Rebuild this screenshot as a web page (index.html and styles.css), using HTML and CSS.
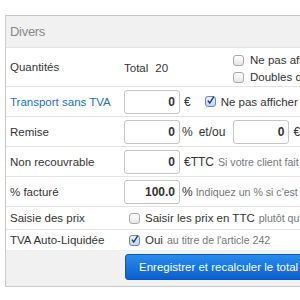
FILE: index.html
```html
<!DOCTYPE html>
<html lang="fr">
<head>
  <meta charset="UTF-8">
  <meta name="viewport" content="width=device-width, initial-scale=1.0">
  <title>Divers</title>
  <link rel="stylesheet" href="styles.css">
</head>
<body>
  <div class="panel">
    <div class="panel_head">Divers</div>

    <div class="row row_qty">
      <div class="label">Quantités</div>
      <div class="value qty">
        <div class="total"><span>Total</span><span>20</span></div>
        <div class="checks">
          <div class="check_line"><span class="box"></span>Ne pas afficher les quantités</div>
          <div class="check_line"><span class="box"></span>Doubles quantités</div>
        </div>
      </div>
    </div>

    <div class="row">
      <div class="label link">Transport sans TVA</div>
      <div class="value">
        <div class="field">0</div>
        <span class="unit">€</span>
        <span class="box box_on wide">
          <svg width="11" height="11" viewBox="0 0 11 11"><path d="M2.3 5.6 L4.6 8.6 L9.6 0.8" fill="none" stroke="#1f3b73" stroke-width="1.8"/></svg>
        </span>
        <span>Ne pas afficher le transport</span>
      </div>
    </div>

    <div class="row">
      <div class="label">Remise</div>
      <div class="value">
        <div class="field">0</div>
        <span class="unit unit_pct">%</span>
        <span class="andor">et/ou</span>
        <div class="field">0</div>
        <span class="unit">€</span>
      </div>
    </div>

    <div class="row">
      <div class="label">Non recouvrable</div>
      <div class="value">
        <div class="field">0</div>
        <span class="unit">€TTC</span>
        <span class="hint">Si votre client fait de la rétention</span>
      </div>
    </div>

    <div class="row">
      <div class="label">% facturé</div>
      <div class="value">
        <div class="field">100.0</div>
        <span class="unit unit_pct">%</span>
        <span class="hint hint_pct">Indiquez un % si c'est un acompte</span>
      </div>
    </div>

    <div class="row row_small">
      <div class="label">Saisie des prix</div>
      <div class="value">
        <span class="box box_line"></span>
        <span>Saisir les prix en TTC</span>
        <span class="hint">plutôt qu'en HT</span>
      </div>
    </div>

    <div class="row row_last">
      <div class="label">TVA Auto-Liquidée</div>
      <div class="value">
        <span class="box box_on box_line">
          <svg width="11" height="11" viewBox="0 0 11 11"><path d="M2.3 5.6 L4.6 8.6 L9.6 0.8" fill="none" stroke="#1f3b73" stroke-width="1.8"/></svg>
        </span>
        <span>Oui</span>
        <span class="hint">au titre de l'article 242</span>
      </div>
    </div>

    <div class="panel_foot">
      <button class="btn">Enregistrer et recalculer le total</button>
    </div>
  </div>
</body>
</html>
```

FILE: styles.css
```css
* {
  margin: 0;
  padding: 0;
  box-sizing: border-box;
}
body {
  overflow: hidden;
  font-family: "Liberation Sans", Arial, sans-serif;
  font-size: 11.5px;
  color: #333;
  background: #fff;
}
/* panneau principal, plus large que la fenêtre */
.panel {
  width: 480px;
  margin: 15px 0 0 5px;
  border: 1px solid #c9c9c9;
  white-space: nowrap;
}
.panel_head {
  height: 32px;
  padding: 8px 0 0 4px;
  background: #f1f1f1;
  border-bottom: 1px solid #e2e2e2;
  font-size: 13px;
  color: #8a8a8a;
  letter-spacing: -0.3px;
}
/* lignes du formulaire */
.row {
  display: grid;
  grid-template-columns: 118px 1fr;
  align-items: center;
  height: 30px;
  border-bottom: 1px solid #e4e4e4;
}
.row_qty {
  height: 39px;
  align-items: stretch;
}
.row_qty .label {
  align-self: center;
}
.row_small {
  height: 23px;
}
.row_last {
  height: 20px;
  border-bottom: 0;
}
.label {
  padding-left: 4px;
}
.link {
  color: #1d6fc2;
}
.value {
  display: flex;
  align-items: center;
}
/* quantités */
.qty {
  display: grid;
  grid-template-columns: 109px auto;
  padding-top: 3px;
  line-height: 17px;
}
.total {
  display: flex;
  gap: 7px;
}
.check_line {
  display: flex;
  align-items: center;
}
/* cases à cocher */
.box {
  display: inline-flex;
  flex: none;
  width: 11px;
  height: 11px;
  margin-right: 6px;
  border: 1px solid #a9a9a9;
  border-radius: 3px;
  background: linear-gradient(#ffffff, #e6e6e6);
  overflow: visible;
}
.box svg {
  margin: -2px 0 0 0;
}
.box_on {
  border-color: #6c86b0;
  background: linear-gradient(#eaf1fb, #c5d6ef);
}
.box_line {
  margin-left: 5px;
  margin-right: 5px;
}
.wide {
  margin-left: 14px;
  margin-right: 5px;
}
/* champs de saisie */
.field {
  width: 56px;
  height: 24px;
  padding: 0 4px;
  border: 1px solid #c6c6c6;
  border-radius: 3px;
  background: #fff;
  font-size: 12px;
  font-weight: bold;
  color: #333;
  text-align: right;
  line-height: 22px;
}
.unit {
  margin-left: 4px;
  font-size: 12px;
}
.unit_pct {
  margin-left: 2px;
}
.andor {
  margin: 0 8px 0 6px;
  font-size: 12px;
}
.hint {
  margin-left: 4px;
  font-size: 10.6px;
  color: #777;
}
.hint_pct {
  margin-left: 3px;
}
/* bas du panneau */
.panel_foot {
  height: 36px;
  padding: 4px 0 0 119px;
  background: #f1f1f1;
}
.btn {
  height: 26px;
  padding: 0 13px;
  border: 1px solid #0a55b8;
  border-radius: 3px;
  background: linear-gradient(#2a8bec, #0a5fd0);
  color: #fff;
  font-family: inherit;
  font-size: 11.5px;
}
```
